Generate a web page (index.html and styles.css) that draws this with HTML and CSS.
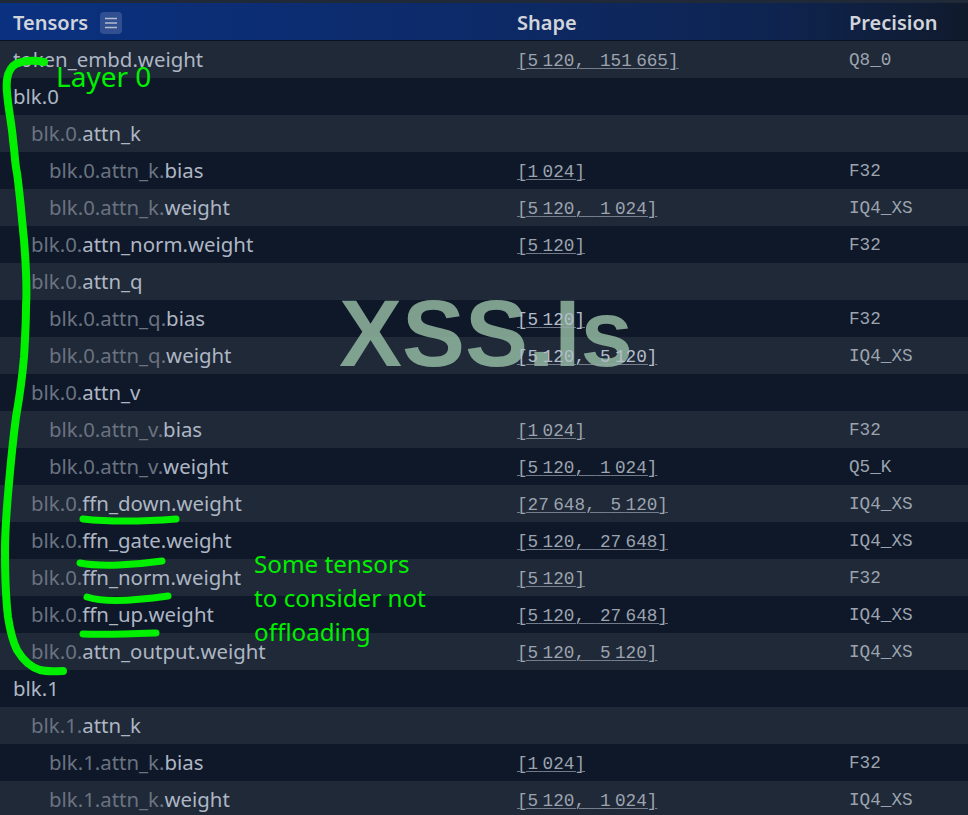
FILE: index.html
```html
<!DOCTYPE html>
<html lang="en">
<head>
<meta charset="utf-8">
<title>Tensors</title>
<link rel="stylesheet" href="styles.css">
</head>
<body>
<div class="topstrip"></div>
<div class="table">
  <div class="row head">
    <div class="name"><span>Tensors</span><span class="menu"><svg width="22" height="22" viewBox="0 0 22 22"><path d="M5 6.500h12M5 11h12M5 15.500h12" stroke="#b4bccb" stroke-width="1.400" fill="none"/></svg></span></div>
    <div class="shape">Shape</div>
    <div class="prec">Precision</div>
  </div>
  <div class="row"><div class="name">token_embd.weight</div><div class="shape mono"><u>[5<b>&#8201;</b>120,&nbsp;<b>&#8201;</b>151<b>&#8201;</b>665]</u></div><div class="prec mono">Q8_0</div></div>
  <div class="row"><div class="name">blk.0</div></div>
  <div class="row"><div class="name l1"><i>blk.0.</i>attn_k</div></div>
  <div class="row"><div class="name l2"><i>blk.0.attn_k.</i>bias</div><div class="shape mono"><u>[1<b>&#8201;</b>024]</u></div><div class="prec mono">F32</div></div>
  <div class="row"><div class="name l2"><i>blk.0.attn_k.</i>weight</div><div class="shape mono"><u>[5<b>&#8201;</b>120,&nbsp;<b>&#8201;</b>1<b>&#8201;</b>024]</u></div><div class="prec mono">IQ4_XS</div></div>
  <div class="row"><div class="name l1"><i>blk.0.</i>attn_norm.weight</div><div class="shape mono"><u>[5<b>&#8201;</b>120]</u></div><div class="prec mono">F32</div></div>
  <div class="row"><div class="name l1"><i>blk.0.</i>attn_q</div></div>
  <div class="row"><div class="name l2"><i>blk.0.attn_q.</i>bias</div><div class="shape mono over"><u>[5<b>&#8201;</b>120]</u></div><div class="prec mono">F32</div></div>
  <div class="row"><div class="name l2"><i>blk.0.attn_q.</i>weight</div><div class="shape mono over"><u>[5<b>&#8201;</b>120,&nbsp;<b>&#8201;</b>5<b>&#8201;</b>120]</u></div><div class="prec mono">IQ4_XS</div></div>
  <div class="row"><div class="name l1"><i>blk.0.</i>attn_v</div></div>
  <div class="row"><div class="name l2"><i>blk.0.attn_v.</i>bias</div><div class="shape mono"><u>[1<b>&#8201;</b>024]</u></div><div class="prec mono">F32</div></div>
  <div class="row"><div class="name l2"><i>blk.0.attn_v.</i>weight</div><div class="shape mono"><u>[5<b>&#8201;</b>120,&nbsp;<b>&#8201;</b>1<b>&#8201;</b>024]</u></div><div class="prec mono">Q5_K</div></div>
  <div class="row"><div class="name l1"><i>blk.0.</i>ffn_down.weight</div><div class="shape mono"><u>[27<b>&#8201;</b>648,&nbsp;<b>&#8201;</b>5<b>&#8201;</b>120]</u></div><div class="prec mono">IQ4_XS</div></div>
  <div class="row"><div class="name l1"><i>blk.0.</i>ffn_gate.weight</div><div class="shape mono"><u>[5<b>&#8201;</b>120,&nbsp;<b>&#8201;</b>27<b>&#8201;</b>648]</u></div><div class="prec mono">IQ4_XS</div></div>
  <div class="row"><div class="name l1"><i>blk.0.</i>ffn_norm.weight</div><div class="shape mono"><u>[5<b>&#8201;</b>120]</u></div><div class="prec mono">F32</div></div>
  <div class="row"><div class="name l1"><i>blk.0.</i>ffn_up.weight</div><div class="shape mono"><u>[5<b>&#8201;</b>120,&nbsp;<b>&#8201;</b>27<b>&#8201;</b>648]</u></div><div class="prec mono">IQ4_XS</div></div>
  <div class="row"><div class="name l1"><i>blk.0.</i>attn_output.weight</div><div class="shape mono"><u>[5<b>&#8201;</b>120,&nbsp;<b>&#8201;</b>5<b>&#8201;</b>120]</u></div><div class="prec mono">IQ4_XS</div></div>
  <div class="row"><div class="name">blk.1</div></div>
  <div class="row"><div class="name l1"><i>blk.1.</i>attn_k</div></div>
  <div class="row"><div class="name l2"><i>blk.1.attn_k.</i>bias</div><div class="shape mono"><u>[1<b>&#8201;</b>024]</u></div><div class="prec mono">F32</div></div>
  <div class="row"><div class="name l2"><i>blk.1.attn_k.</i>weight</div><div class="shape mono"><u>[5<b>&#8201;</b>120,&nbsp;<b>&#8201;</b>1<b>&#8201;</b>024]</u></div><div class="prec mono">IQ4_XS</div></div>
</div>
<div class="watermark">XSS.Is</div>
<svg class="ink" width="968" height="815" viewBox="0 0 968 815">
  <path d="M44 62C34 60 20 60 13 66C7 72 6 82 7 92C8 108 12 125 13 140C15 155 15 165 17 173C20 195 22 220 24 240C26 265 27 290 26 307C26 325 25 340 24 357C22 380 19 400 16 417C13 440 11 460 9 483C7 505 5 530 5 550C5 575 6 600 8 617C10 630 13 642 17 650C23 660 30 667 40 670C48 672 55 671 63 671"/>
  <path class="thin" d="M83 519C110 522 150 521 176 519"/>
  <path class="thin" d="M80 563C100 567 135 565 162 561"/>
  <path class="thin" d="M87 597C105 603 140 600 168 596"/>
  <path class="thin" d="M83 634C105 635 130 634 156 633"/>
</svg>
<div class="note layer">Layer 0</div>
<div class="note some">Some tensors<br>to consider not<br>offloading</div>
</body>
</html>
```
FILE: styles.css
```css
html, body { margin: 0; padding: 0; }
body {
  width: 968px;
  height: 815px;
  overflow: hidden;
  position: relative;
  background: #1f2937;
  font-family: "Noto Sans", sans-serif;
}
.topstrip { height: 3px; background: #1f2937; }
.row {
  display: flex;
  align-items: center;
  height: 37px;
  background: #0e1828;
  color: #aeb6c4;
  font-size: 20.400px;
}
.row:nth-child(even) { background: #1f2937; }
.row:not(.head) .name { padding-bottom: 2px; }
.head {
  height: 38px;
  box-sizing: border-box;
  border-bottom: 1px solid #0b1220;
  padding-top: 2px;
  background: linear-gradient(90deg, #0a3180 0%, #0d2a68 50%, #0e2450 80%, #101a2c 100%);
  color: #d1d5db;
  font-size: 20px;
  font-weight: 600;
}
.name, .shape, .prec { position: relative; z-index: 2; }
.name { width: 517px; padding-left: 13px; box-sizing: border-box; display: flex; align-items: center; gap: 12px; }
.name i { font-style: normal; color: #6b7280; }
.row:not(.head) .name { display: block; }
.row:not(.head) .l1 { padding-left: 31px; }
.row:not(.head) .l2 { padding-left: 49px; }
.shape { width: 332px; }
.prec { flex: 1; }
.mono { font-family: "Liberation Mono", monospace; font-size: 17.700px; color: #9ca3af; }
.mono.over { color: #b4bccb; }
.mono u { text-decoration-color: rgba(156, 163, 175, 0.7); text-decoration-thickness: 1px; text-underline-offset: 2px; }
.mono b { font-family: "Noto Sans", sans-serif; font-weight: 400; font-size: 17px; letter-spacing: 1.500px; }
.menu {
  width: 22px; height: 22px; border-radius: 4px;
  background: rgba(120, 140, 190, 0.35);
  display: flex;
}
.watermark {
  position: absolute; left: 339px; top: 273px; z-index: 1;
  font-family: "Liberation Sans", sans-serif; font-weight: 700; font-size: 94.500px;
  line-height: 120px; color: rgba(146, 183, 160, 0.85);
}
.ink { position: absolute; left: 0; top: 0; z-index: 3; pointer-events: none; }
.ink path { fill: none; stroke: #00f000; stroke-width: 8px; stroke-linecap: round; stroke-linejoin: round; }
.ink .thin { stroke-width: 7px; }
.note { position: absolute; z-index: 4; color: #00f000; font-family: "Noto Sans", sans-serif; font-size: 24.200px; }
.layer { left: 56px; top: 58px; line-height: 36px; font-size: 28px; }
.some { left: 254px; top: 547px; line-height: 34px; }
```
